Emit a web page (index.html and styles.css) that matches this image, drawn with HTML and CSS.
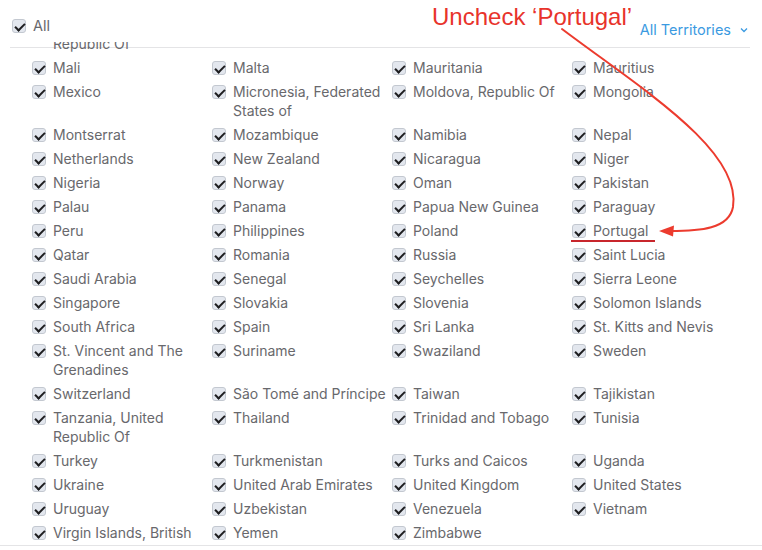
FILE: index.html
```html
<!DOCTYPE html>
<html lang="en">
<head>
<meta charset="utf-8">
<title>Territories</title>
<link rel="stylesheet" href="styles.css">
</head>
<body>
<div class="page">
  <header class="toolbar">
    <label class="option option-all"><span class="box"></span><span class="label">All</span></label>
    <button class="territories" type="button">All Territories
      <svg class="chevron" width="8" height="6" viewBox="0 0 8 6"><polyline points="1,1.5 4,4.5 7,1.5" fill="none" stroke="#3b9ae1" stroke-width="1.3"/></svg>
    </button>
  </header>

  <div class="list">
    <div class="grid">
      <label class="option"><span class="box"></span><span class="label">Macedonia, The<br>Former Yugoslav<br>Republic Of</span></label>
      <span class="cell-empty"></span>
      <span class="cell-empty"></span>
      <span class="cell-empty"></span>

      <label class="option"><span class="box"></span><span class="label">Mali</span></label>
      <label class="option"><span class="box"></span><span class="label">Malta</span></label>
      <label class="option"><span class="box"></span><span class="label">Mauritania</span></label>
      <label class="option"><span class="box"></span><span class="label">Mauritius</span></label>

      <label class="option"><span class="box"></span><span class="label">Mexico</span></label>
      <label class="option"><span class="box"></span><span class="label">Micronesia, Federated<br>States of</span></label>
      <label class="option"><span class="box"></span><span class="label">Moldova, Republic Of</span></label>
      <label class="option"><span class="box"></span><span class="label">Mongolia</span></label>

      <label class="option"><span class="box"></span><span class="label">Montserrat</span></label>
      <label class="option"><span class="box"></span><span class="label">Mozambique</span></label>
      <label class="option"><span class="box"></span><span class="label">Namibia</span></label>
      <label class="option"><span class="box"></span><span class="label">Nepal</span></label>

      <label class="option"><span class="box"></span><span class="label">Netherlands</span></label>
      <label class="option"><span class="box"></span><span class="label">New Zealand</span></label>
      <label class="option"><span class="box"></span><span class="label">Nicaragua</span></label>
      <label class="option"><span class="box"></span><span class="label">Niger</span></label>

      <label class="option"><span class="box"></span><span class="label">Nigeria</span></label>
      <label class="option"><span class="box"></span><span class="label">Norway</span></label>
      <label class="option"><span class="box"></span><span class="label">Oman</span></label>
      <label class="option"><span class="box"></span><span class="label">Pakistan</span></label>

      <label class="option"><span class="box"></span><span class="label">Palau</span></label>
      <label class="option"><span class="box"></span><span class="label">Panama</span></label>
      <label class="option"><span class="box"></span><span class="label">Papua New Guinea</span></label>
      <label class="option"><span class="box"></span><span class="label">Paraguay</span></label>

      <label class="option"><span class="box"></span><span class="label">Peru</span></label>
      <label class="option"><span class="box"></span><span class="label">Philippines</span></label>
      <label class="option"><span class="box"></span><span class="label">Poland</span></label>
      <label class="option"><span class="box"></span><span class="label">Portugal</span></label>

      <label class="option"><span class="box"></span><span class="label">Qatar</span></label>
      <label class="option"><span class="box"></span><span class="label">Romania</span></label>
      <label class="option"><span class="box"></span><span class="label">Russia</span></label>
      <label class="option"><span class="box"></span><span class="label">Saint Lucia</span></label>

      <label class="option"><span class="box"></span><span class="label">Saudi Arabia</span></label>
      <label class="option"><span class="box"></span><span class="label">Senegal</span></label>
      <label class="option"><span class="box"></span><span class="label">Seychelles</span></label>
      <label class="option"><span class="box"></span><span class="label">Sierra Leone</span></label>

      <label class="option"><span class="box"></span><span class="label">Singapore</span></label>
      <label class="option"><span class="box"></span><span class="label">Slovakia</span></label>
      <label class="option"><span class="box"></span><span class="label">Slovenia</span></label>
      <label class="option"><span class="box"></span><span class="label">Solomon Islands</span></label>

      <label class="option"><span class="box"></span><span class="label">South Africa</span></label>
      <label class="option"><span class="box"></span><span class="label">Spain</span></label>
      <label class="option"><span class="box"></span><span class="label">Sri Lanka</span></label>
      <label class="option"><span class="box"></span><span class="label">St. Kitts and Nevis</span></label>

      <label class="option"><span class="box"></span><span class="label">St. Vincent and The<br>Grenadines</span></label>
      <label class="option"><span class="box"></span><span class="label">Suriname</span></label>
      <label class="option"><span class="box"></span><span class="label">Swaziland</span></label>
      <label class="option"><span class="box"></span><span class="label">Sweden</span></label>

      <label class="option"><span class="box"></span><span class="label">Switzerland</span></label>
      <label class="option"><span class="box"></span><span class="label">São Tomé and Príncipe</span></label>
      <label class="option"><span class="box"></span><span class="label">Taiwan</span></label>
      <label class="option"><span class="box"></span><span class="label">Tajikistan</span></label>

      <label class="option"><span class="box"></span><span class="label">Tanzania, United<br>Republic Of</span></label>
      <label class="option"><span class="box"></span><span class="label">Thailand</span></label>
      <label class="option"><span class="box"></span><span class="label">Trinidad and Tobago</span></label>
      <label class="option"><span class="box"></span><span class="label">Tunisia</span></label>

      <label class="option"><span class="box"></span><span class="label">Turkey</span></label>
      <label class="option"><span class="box"></span><span class="label">Turkmenistan</span></label>
      <label class="option"><span class="box"></span><span class="label">Turks and Caicos</span></label>
      <label class="option"><span class="box"></span><span class="label">Uganda</span></label>

      <label class="option"><span class="box"></span><span class="label">Ukraine</span></label>
      <label class="option"><span class="box"></span><span class="label">United Arab Emirates</span></label>
      <label class="option"><span class="box"></span><span class="label">United Kingdom</span></label>
      <label class="option"><span class="box"></span><span class="label">United States</span></label>

      <label class="option"><span class="box"></span><span class="label">Uruguay</span></label>
      <label class="option"><span class="box"></span><span class="label">Uzbekistan</span></label>
      <label class="option"><span class="box"></span><span class="label">Venezuela</span></label>
      <label class="option"><span class="box"></span><span class="label">Vietnam</span></label>

      <label class="option"><span class="box"></span><span class="label">Virgin Islands, British</span></label>
      <label class="option"><span class="box"></span><span class="label">Yemen</span></label>
      <label class="option"><span class="box"></span><span class="label">Zimbabwe</span></label>
    </div>
  </div>

  <div class="note-text">Uncheck ‘Portugal’</div>
  <svg class="note-arrow" width="762" height="550" viewBox="0 0 762 550">
    <path d="M 562 29 C 640 88, 742 150, 733 207 C 729 229, 700 231, 670 231" fill="none" stroke="#ec3b2e" stroke-width="2" stroke-linecap="round"/>
    <polygon points="659,231 674,225.5 673,236.5" fill="#ec3b2e"/>
    <line x1="571" y1="241" x2="655" y2="241" stroke="#c8262c" stroke-width="2"/>
  </svg>
</div>
</body>
</html>
```

FILE: styles.css
```css
* {
  box-sizing: border-box;
}

html, body {
  margin: 0;
  padding: 0;
  background: #ffffff;
}

body {
  font-family: Inter, "Liberation Sans", Arial, sans-serif;
  font-size: 14px;
  color: #68686c;
}

.page {
  position: relative;
  width: 762px;
  height: 550px;
  overflow: hidden;
}

.toolbar {
  height: 48px;
  margin: 0 12px 0 10px;
  padding: 0 2px;
  border-bottom: 1px solid #e4e4e6;
  display: flex;
  justify-content: space-between;
  align-items: flex-start;
}

.option {
  display: flex;
  align-items: flex-start;
  gap: 7px;
  line-height: 19px;
}

.option-all {
  margin-top: 16px;
  font-size: 14.5px;
}

.box {
  position: relative;
  flex: none;
  width: 14px;
  height: 14px;
  margin-top: 3px;
  border: 1px solid #c3c8d0;
  border-radius: 3px;
  background: #e3e7ee;
}

.box::after {
  content: "";
  position: absolute;
  left: 3.5px;
  top: 0.5px;
  width: 4px;
  height: 8px;
  border: solid #1e1e20;
  border-width: 0 2px 2px 0;
  transform: rotate(45deg);
}

.label {
  white-space: nowrap;
}

.territories {
  margin-top: 20px;
  padding: 0;
  border: 0;
  background: none;
  font: inherit;
  font-size: 14.5px;
  line-height: 19px;
  color: #3b9ae1;
  display: flex;
  align-items: center;
  gap: 9px;
}

.chevron {
  display: block;
  margin-top: 1px;
}

.list {
  height: 504px;
  margin-top: -6px;
  overflow: hidden;
  border-bottom: 1px solid #e4e4e6;
}

.grid {
  margin-top: -46px;
  padding-left: 32px;
  display: grid;
  grid-template-columns: repeat(4, 180px);
  row-gap: 5px;
}

.note-text {
  position: absolute;
  left: 432px;
  top: 3px;
  font-family: "Liberation Sans", Arial, sans-serif;
  font-size: 24px;
  line-height: 28px;
  color: #e8332b;
  white-space: nowrap;
}

.note-arrow {
  position: absolute;
  left: 0;
  top: 0;
  pointer-events: none;
}
```
